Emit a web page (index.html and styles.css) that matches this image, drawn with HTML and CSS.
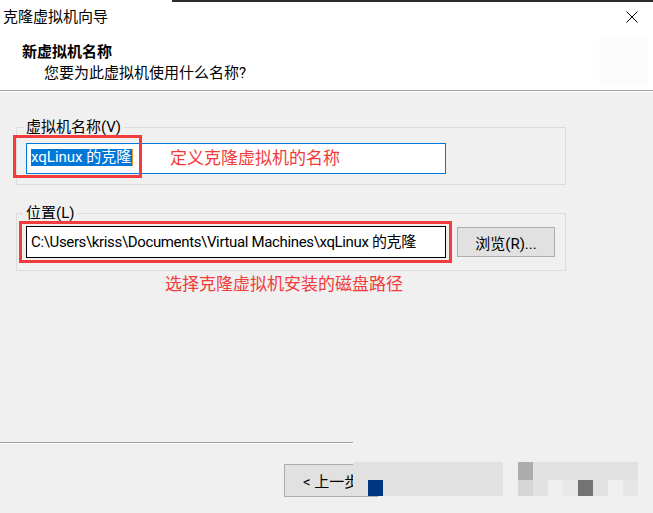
FILE: index.html
```html
<!DOCTYPE html>
<html lang="zh-CN">

<head>
    <meta charset="UTF-8">
    <meta name="viewport" content="width=device-width, initial-scale=1.0">
    <title>克隆虚拟机向导</title>
    <link rel="stylesheet" href="styles.css">
</head>

<body>

    <div class="window">

        <div class="topline"><span></span></div>

        <header class="head">
            <div class="titlebar">
                <span class="title">克隆虚拟机向导</span>
                <svg class="close" width="12" height="12" viewBox="0 0 12 12">
                    <path d="M0.5 0.5 L11.5 11.5 M11.5 0.5 L0.5 11.5" stroke="#000" stroke-width="1" fill="none"/>
                </svg>
            </div>
            <div class="banner">
                <div class="banner-text">
                    <h1>新虚拟机名称</h1>
                    <p>您要为此虚拟机使用什么名称?</p>
                </div>
                <div class="banner-logo"></div>
            </div>
        </header>

        <main class="content">

            <fieldset class="group group-name">
                <legend>虚拟机名称(V)</legend>
                <div class="field">
                    <div class="textbox textbox-focus"><span class="selected">xqLinux 的克隆</span></div>
                    <span class="mark mark-name"></span>
                    <span class="note note-name">定义克隆虚拟机的名称</span>
                </div>
            </fieldset>

            <fieldset class="group group-path">
                <legend>位置(L)</legend>
                <div class="field">
                    <div class="textbox textbox-dark">C:\Users\kriss\Documents\Virtual Machines\xqLinux 的克隆</div>
                    <button class="btn btn-browse">浏览(R)...</button>
                    <span class="mark mark-path"></span>
                </div>
            </fieldset>

            <p class="note-path">选择克隆虚拟机安装的磁盘路径</p>

        </main>

        <footer class="foot">
            <div class="separator"></div>
            <div class="buttons">
                <button class="btn btn-back">&lt; 上一步(B)</button>
                <!-- pixelated part of the screenshot, lies over the other buttons -->
                <div class="mosaic mosaic-a">
                    <span></span><span></span><span></span><span></span><span></span>
                    <span></span><span></span><span></span><span></span><span></span>
                    <span></span><span class="c-blue"></span><span></span><span></span><span></span>
                    <span></span><span></span><span></span><span></span><span></span>
                </div>
                <div class="mosaic mosaic-b">
                    <span class="c-a"></span><span></span><span></span><span></span>
                    <span></span><span></span><span></span><span></span>
                    <span class="c-d6"></span><span></span><span class="c-ef"></span><span class="c-e8"></span>
                    <span class="c-73"></span><span></span><span class="c-f0"></span><span class="c-e6"></span>
                </div>
            </div>
        </footer>

    </div>

</body>

</html>
```

FILE: styles.css
```css
:root {
    --face: #F0F0F0;
    --button: #E1E1E1;
    --button-border: #ADADAD;
    --group-border: #DCDCDC;
    --blue: #0078D7;
    --red: #F23B3B;
}

* {
    margin: 0;
    box-sizing: border-box;
    font-family: "Segoe UI", Roboto, "Noto Sans CJK SC", sans-serif;
}

body {
    background-color: var(--face);
    color: #000;
    font-size: 15px;
    line-height: 20px;
}

.window {
    display: flex;
    flex-direction: column;
    height: 513px;
}

/* dark edge of the window behind */
.topline {
    height: 2px;
    background-color: #fff;
    display: flex;
}

.topline span {
    flex: 1 1 0%;
    margin-left: 172px;
    background-color: #2B2B2B;
}

.head {
    background-color: #fff;
    border-bottom: 1px solid #A0A0A0;
    box-shadow: 0 1px 0 #fff;
    height: 89px;
}

.titlebar {
    height: 30px;
    display: flex;
    justify-content: space-between;
    align-items: flex-start;
    padding: 5px 15px 0 3px;
}

.close {
    margin-top: 4px;
}

.banner {
    display: flex;
    justify-content: space-between;
    padding: 0 5px 0 22px;
}

.banner-text {
    padding-top: 10px;
}

.banner h1 {
    font-size: 15px;
    font-weight: bold;
}

.banner p {
    margin-top: 1px;
    padding-left: 22px;
}

.banner-logo {
    width: 49px;
    height: 48px;
    margin-top: 6px;
    background-color: #FCFCFC;
}

.content {
    padding-top: 1px;
}

.group {
    width: 550px;
    margin-left: 16px;
    border: 1px solid var(--group-border);
    padding: 6px 9px 10px 9px;
    min-width: 0;
}

.group-name {
    margin-top: 25px;
}

.group-path {
    margin-top: 18px;
    padding-top: 3px;
    padding-bottom: 12px;
}

.group legend {
    padding: 0 3px;
    margin-left: -3px;
}

.field {
    position: relative;
    display: flex;
    align-items: center;
}

.textbox {
    width: 420px;
    background-color: #fff;
    white-space: nowrap;
    overflow: hidden;
}

.textbox-focus {
    height: 31px;
    border: 1px solid var(--blue);
    padding: 3px 0 0 4px;
}

.textbox-focus .selected {
    display: inline-block;
    background-color: var(--blue);
    color: #fff;
    line-height: 17px;
    padding-right: 1px;
    border-right: 1px solid #E8922E;
}

.textbox-dark {
    height: 32px;
    border: 1px solid #000;
    padding: 5px 0 0 4px;
    letter-spacing: -0.35px;
}

.btn {
    appearance: none;
    background-color: var(--button);
    border: 1px solid var(--button-border);
    font-size: 15px;
    color: #000;
    padding: 0;
}

.btn-browse {
    width: 98px;
    height: 30px;
    margin-left: 11px;
}

/* red annotations drawn on top of the screenshot */
.mark {
    position: absolute;
    border: 3px solid var(--red);
}

.mark-name {
    left: -13px;
    top: -8px;
    width: 129px;
    height: 43px;
}

.mark-path {
    left: -7px;
    top: -5px;
    width: 433px;
    height: 42px;
}

.note {
    position: absolute;
    color: var(--red);
    font-size: 17px;
}

.note-name {
    left: 144px;
    top: 5px;
}

.note-path {
    color: var(--red);
    font-size: 17px;
    margin-top: 3px;
    padding-left: 165px;
}

.foot {
    margin-top: auto;
    padding-bottom: 16px;
}

.separator {
    width: 353px;
    height: 2px;
    border-top: 1px solid #A0A0A0;
    border-bottom: 1px solid #fff;
}

.buttons {
    position: relative;
    height: 35px;
    margin-top: 18px;
    padding-left: 284px;
}

.btn-back {
    width: 94px;
    height: 33px;
    margin-top: 2px;
    padding-left: 18px;
    text-align: left;
    white-space: nowrap;
}

.mosaic {
    position: absolute;
    top: 0;
    display: grid;
    grid-template-rows: 18px 16px;
}

.mosaic span {
    background-color: var(--button);
}

.mosaic-a {
    left: 353px;
    grid-template-columns: repeat(10, 15px);
}

.mosaic-b {
    left: 518px;
    grid-template-columns: repeat(8, 15px);
}

.mosaic .c-blue { background-color: #00357F; }
.mosaic .c-a { background-color: #ACACAC; }
.mosaic .c-d6 { background-color: #D6D6D6; }
.mosaic .c-ef { background-color: #EFEFEF; }
.mosaic .c-e8 { background-color: #E8E8E8; }
.mosaic .c-73 { background-color: #737373; }
.mosaic .c-f0 { background-color: #F0F0F0; }
.mosaic .c-e6 { background-color: #E6E6E6; }
```
